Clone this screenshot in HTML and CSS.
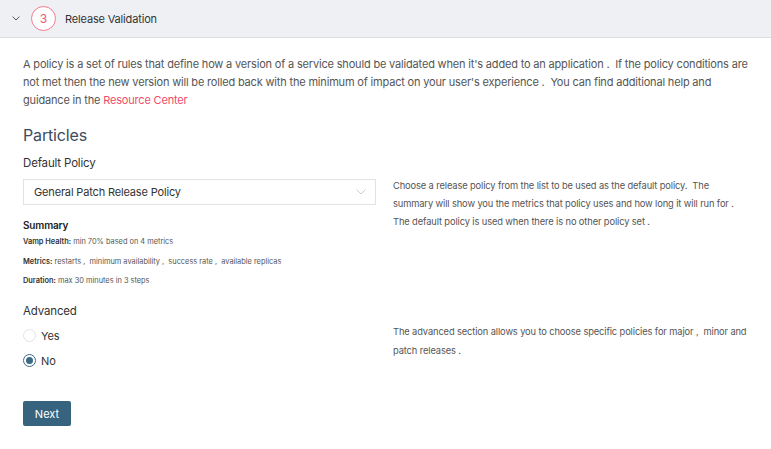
FILE: index.html
```html
<!DOCTYPE html>
<html lang="en">
<head>
<meta charset="utf-8">
<link rel="stylesheet" href="styles.css">
</head>
<body>
<div class="header">
  <svg class="chev" width="8" height="5" viewBox="0 0 8 5"><path d="M0.6 0.6l3.4 3.4 3.4-3.4" fill="none" stroke="#555" stroke-width="1"/></svg>
  <div class="step">3</div>
  <div class="title">Release Validation</div>
</div>
<div class="content">
  <p class="intro">A policy is a set of rules that define how a version of a service should be validated when it's added to an application .&nbsp; If the policy conditions are not met then the new version will be rolled back with the minimum of impact on your user's experience .&nbsp; You can find additional help and guidance in the <a class="link" href="#">Resource Center</a></p>
  <h2 class="heading">Particles</h2>
  <div class="row">
    <div class="left">
      <div class="label">Default Policy</div>
      <div class="select">
        <span>General Patch Release Policy</span>
        <svg width="10" height="6" viewBox="0 0 10 6"><path d="M0.5 0.5l4.5 4.5 4.5-4.5" fill="none" stroke="#c8c8c8" stroke-width="0.9"/></svg>
      </div>
      <div class="summary-title">Summary</div>
      <div class="summary-line"><b>Vamp Health:</b> min 70% based on 4 metrics</div>
      <div class="summary-line"><b>Metrics:</b> restarts ,&nbsp; minimum availability ,&nbsp; success rate ,&nbsp; available replicas</div>
      <div class="summary-line"><b>Duration:</b> max 30 minutes in 3 steps</div>
    </div>
    <p class="help help-1">Choose a release policy from the list to be used as the default policy.&nbsp; The summary will show you the metrics that policy uses and how long it will run for . The default policy is used when there is no other policy set .</p>
  </div>
  <div class="row">
    <div class="left">
      <div class="label adv">Advanced</div>
      <div class="radios">
        <label class="radio"><span class="dot"></span>Yes</label>
        <label class="radio"><span class="dot on"></span>No</label>
      </div>
    </div>
    <p class="help help-2">The advanced section allows you to choose specific policies for major ,&nbsp; minor and patch releases .</p>
  </div>
  <button class="next">Next</button>
</div>
</body>
</html>
```
FILE: styles.css
```css
* { box-sizing: border-box; }
body { margin: 0; background: #fff; font-family: Inter, "Noto Sans", sans-serif; color: #444; letter-spacing: -0.01em; }
.header { height: 38px; background: #eff0f4; border-bottom: 1px solid #dcdde2; display: flex; align-items: center; padding-left: 12px; }
.chev { margin-right: 11px; }
.step { width: 25px; height: 25px; border: 1px solid #f47a8f; border-radius: 50%; color: #ee5571; font-size: 12px; display: flex; align-items: center; justify-content: center; margin-right: 9px; background: #fff; }
.title { font-size: 11px; color: #333; }
.content { padding: 0 23px; }
.intro { margin: 17px 0 0; font-size: 11px; line-height: 18px; color: #555; letter-spacing: -0.016em; }
.link { color: #ef4c6b; text-decoration: none; }
.heading { margin: 16px 0 0; font-size: 16px; font-weight: 400; line-height: 20px; color: #3c4c5e; }
.row { display: flex; gap: 17px; }
.left { width: 353px; flex: none; }
.label { margin-top: 10px; font-size: 11.5px; line-height: 16px; color: #333; }
.select { margin-top: 8px; height: 26px; border: 1px solid #e2e2e2; display: flex; align-items: center; justify-content: space-between; padding: 0 9px 0 10px; font-size: 11px; color: #333; }
.summary-title { margin-top: 13px; font-size: 10px; font-weight: 600; line-height: 14px; color: #222; }
.summary-line { font-size: 7.4px; line-height: 19.5px; color: #555; letter-spacing: 0; }
.summary-line b { font-weight: 600; color: #333; }
.help { margin: 0; font-size: 9.3px; line-height: 18px; color: #555; letter-spacing: -0.012em; }
.help-1 { padding-top: 32px; }
.help-2 { padding-top: 31.5px; line-height: 19px; }
.adv { margin-top: 12px; }
.radios { margin-top: 4.5px; }
.radio { display: flex; align-items: center; height: 25px; font-size: 11px; color: #333; }
.dot { width: 13px; height: 13px; border-radius: 50%; border: 1px solid #e3e3e3; margin-right: 5px; background: #fff; display: flex; align-items: center; justify-content: center; }
.dot.on { border-color: #3b6a86; }
.dot.on::after { content: ""; width: 7px; height: 7px; border-radius: 50%; background: #3b6a86; }
.next { margin-top: 28px; width: 48px; height: 25px; border: none; border-radius: 2px; background: #36647f; color: #fff; font-family: inherit; font-size: 11px; padding: 0; }
```
